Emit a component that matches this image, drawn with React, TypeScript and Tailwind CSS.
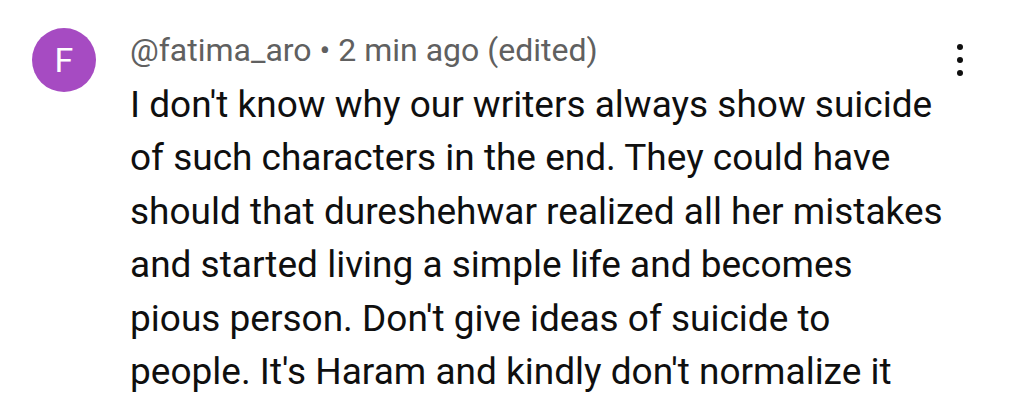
import React from "react";

const body =
  "I don't know why our writers always show suicide of such characters in the end. They could have should that dureshehwar realized all her mistakes and started living a simple life and becomes pious person. Don't give ideas of suicide to people. It's Haram and kindly don't normalize it";

const lines = [
  "I don't know why our writers always show suicide",
  "of such characters in the end. They could have",
  "should that dureshehwar realized all her mistakes",
  "and started living a simple life and becomes",
  "pious person. Don't give ideas of suicide to",
  "people. It's Haram and kindly don't normalize it",
];

export default function App() {
  return (
    <div
      className="w-[1024px] h-[412px] overflow-hidden bg-white flex pl-[32px] pt-[28px]"
      style={{ fontFamily: "Roboto, 'Noto Sans', sans-serif" }}
      aria-label={body}
    >
      <div className="w-[64px] h-[64px] shrink-0 rounded-full bg-[#a64bc2] flex items-center justify-center text-white text-[34px]">
        F
      </div>
      <div className="ml-[34px] flex-1 flex flex-col">
        <div className="flex items-start mt-[2px]">
          <p className="text-[32px] leading-[40px] text-[#606060] flex-1">
            @fatima_aro • 2 min ago (edited)
          </p>
          <div className="flex flex-col items-center gap-[7px] mt-[14px] mr-[61px]">
            <span className="w-[6px] h-[6px] rounded-full bg-[#0f0f0f]" />
            <span className="w-[6px] h-[6px] rounded-full bg-[#0f0f0f]" />
            <span className="w-[6px] h-[6px] rounded-full bg-[#0f0f0f]" />
          </div>
        </div>
        <div className="mt-[2px] text-[37px] leading-[53.4px] text-[#0f0f0f]">
          {lines.map((l) => (
            <p key={l} className="whitespace-nowrap">
              {l}
            </p>
          ))}
        </div>
      </div>
    </div>
  );
}
